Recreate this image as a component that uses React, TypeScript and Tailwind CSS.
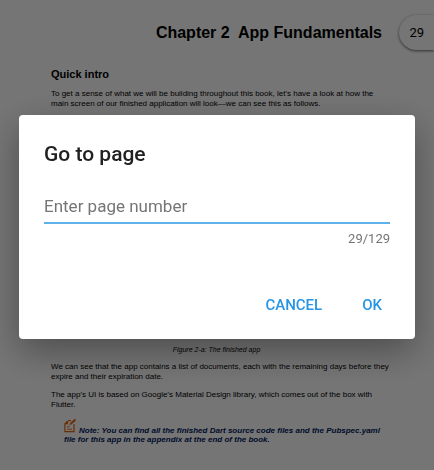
import { useState } from "react";

const PAGE_COUNT = 129;

function NoteIcon() {
  return (
    <svg
      viewBox="0 0 13 15"
      className="mr-0.5 inline-block h-[15px] w-[13px] align-baseline"
      fill="none"
      stroke="#e8660c"
      aria-hidden="true"
    >
      <path d="M3.5 3.2 L0.9 6 V13.6 H10 V6" strokeWidth="1.2" />
      <path d="M0.9 6 L3.8 3 V6 Z" fill="#e8660c" strokeWidth="0.5" />
      <path d="M4 2.6 H7" strokeWidth="1.2" />
      <path d="M3 8.8 H5.5 M3 11.2 H8" strokeWidth="0.9" />
      <path d="M6.5 6 L11.5 1.5" strokeWidth="2" />
      <path d="M5.2 7.2 L6.8 5.8" strokeWidth="0.9" />
    </svg>
  );
}

function BookPage({ page }: { page: number }) {
  return (
    <main className="relative min-h-screen overflow-hidden bg-white pr-[52px] pl-[51px] pt-6 font-['Liberation_Sans',Arial,sans-serif] text-[8px] leading-[10px] text-black">
      <h1 className="text-right text-base leading-[18px] font-bold whitespace-pre">
        Chapter 2  App Fundamentals
      </h1>
      <h2 className="mt-6 text-[11px] leading-4 font-bold">Quick intro</h2>
      <p className="mt-[7px] whitespace-nowrap">
        To get a sense of what we will be building throughout this book, let’s have a look at how the
        <br />
        main screen of our finished application will look—we can see this as follows.
      </p>
      <figure>
        <div className="h-[236px]" />
        <figcaption className="text-center text-[7px] italic">
          Figure 2-a: The finished app
        </figcaption>
      </figure>
      <p className="mt-[7px] whitespace-nowrap">
        We can see that the app contains a list of documents, each with the remaining days before they
        <br />
        expire and their expiration date.
      </p>
      <p className="mt-2 whitespace-nowrap">
        The app’s UI is based on Google’s Material Design library, which comes out of the box with
        <br />
        Flutter.
      </p>
      <p className="mt-2 pl-[13px] leading-[9px] font-bold whitespace-nowrap text-[#002060] italic">
        <NoteIcon />
        Note: You can find all the finished Dart source code files and the Pubspec.yaml
        <br />
        file for this app in the appendix at the end of the book.
      </p>
      <span className="absolute top-[15px] right-0 flex h-[35px] items-center rounded-l-full bg-white px-2.5 font-[Roboto,sans-serif] text-[13px] shadow-[0_1px_3px_rgba(0,0,0,0.6)]">
        {page}
      </span>
    </main>
  );
}

function GoToPageDialog({ page }: { page: number }) {
  const [value, setValue] = useState("");
  return (
    <div className="fixed inset-0 flex items-center bg-black/54 px-[19px] pb-4 font-[Roboto,sans-serif]">
      <form
        role="dialog"
        aria-modal="true"
        aria-labelledby="dialog-title"
        onSubmit={(event) => event.preventDefault()}
        className="w-full rounded-[4px] bg-white px-[25px] pt-[25px] pb-4 shadow-[0_12px_36px_rgba(0,0,0,0.35)]"
      >
        <h2 id="dialog-title" className="text-[21px] leading-7 font-medium text-[#212121]">
          Go to page
        </h2>
        <input
          aria-label="Enter page number"
          inputMode="numeric"
          placeholder="Enter page number"
          value={value}
          onChange={(event) => setValue(event.target.value)}
          className="mt-[21px] block h-[35px] w-full border-b-2 border-[#5fb2e9] text-[17px] text-[#212121] outline-none placeholder:text-[#757575]"
        />
        <p className="mt-[7px] text-right text-[13px] leading-4 text-[#757575]">
          {page}/{PAGE_COUNT}
        </p>
        <div className="mt-10 flex justify-end text-[15px] font-medium text-[#2794e5]">
          <button type="button" className="h-9 px-3">
            CANCEL
          </button>
          <button type="submit" className="ml-4 h-9 pr-2 pl-3">
            OK
          </button>
        </div>
      </form>
    </div>
  );
}

export default function App() {
  const page = 29;
  return (
    <>
      <BookPage page={page} />
      <GoToPageDialog page={page} />
    </>
  );
}
